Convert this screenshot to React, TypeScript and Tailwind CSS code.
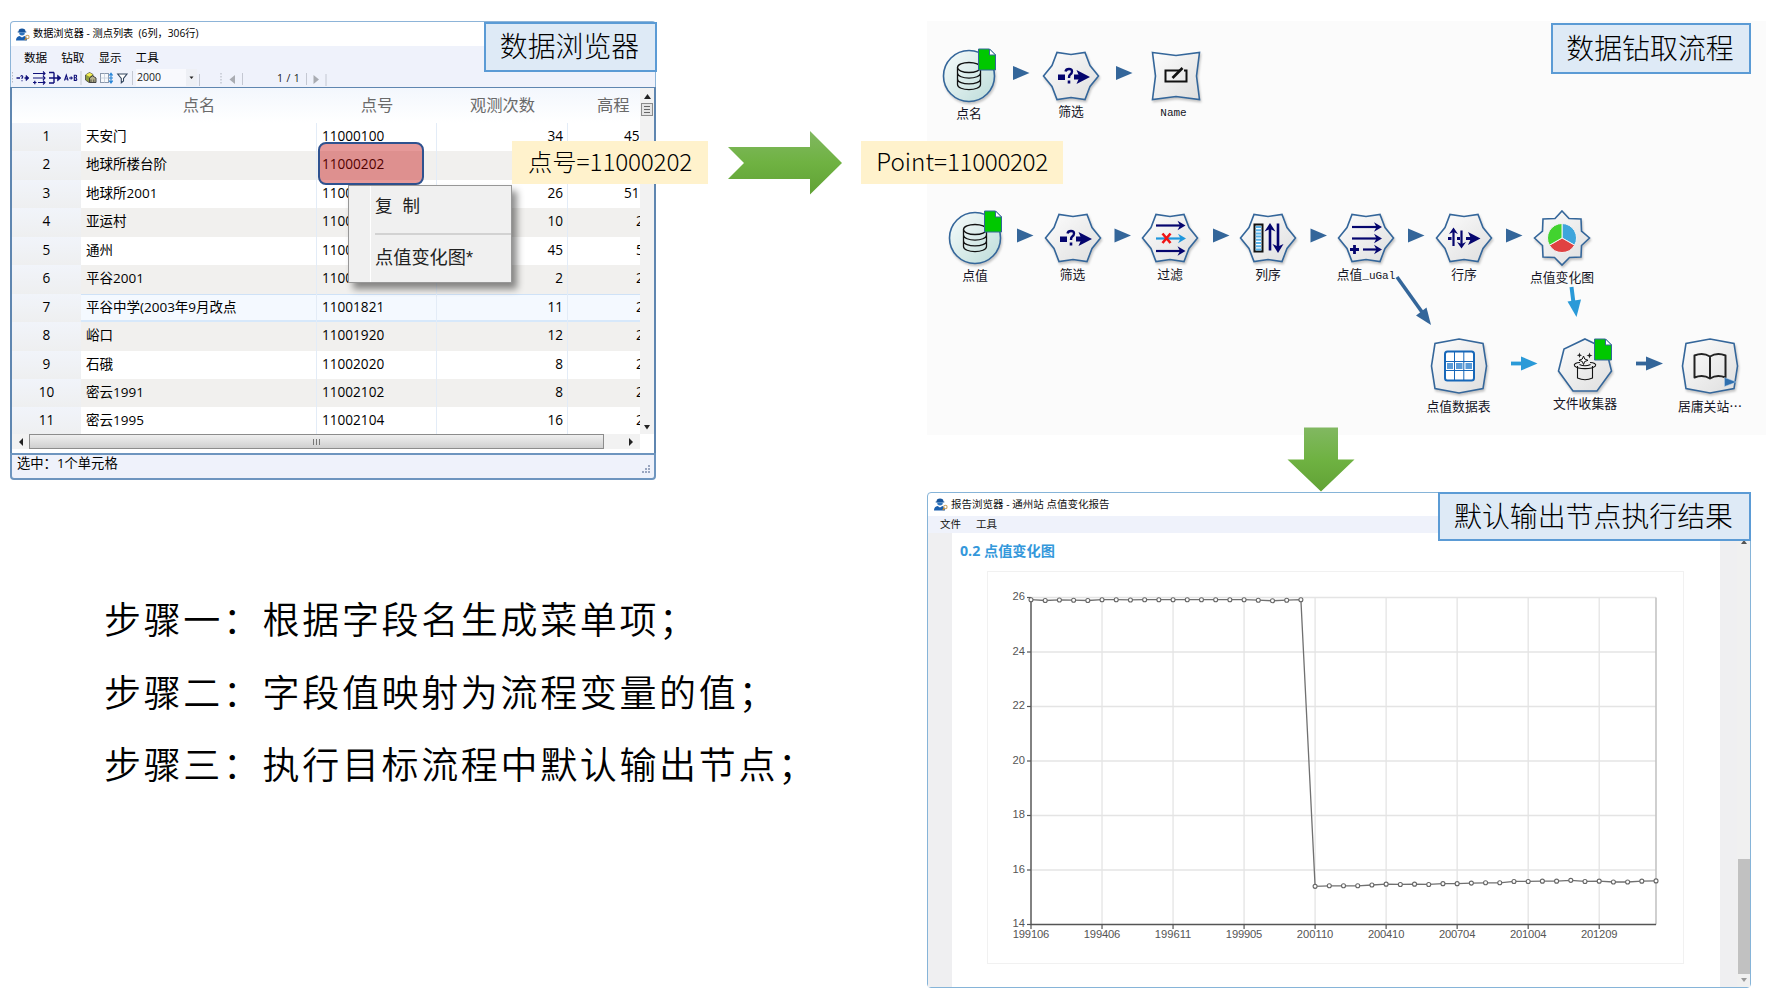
import React from "react";

const UI = "font-['Open_Sans','Noto_Sans_CJK_SC',sans-serif]";
const CJK = "font-['Noto_Sans_CJK_SC',sans-serif]";

const rows = [
  ["天安门", "11000100", "34", "45"],
  ["地球所楼台阶", "11000202", "", ""],
  ["地球所2001", "11000303", "26", "51"],
  ["亚运村", "11000410", "10", "2"],
  ["通州", "11001120", "45", "5"],
  ["平谷2001", "11001820", "2", "2"],
  ["平谷中学(2003年9月改点", "11001821", "11", "2"],
  ["峪口", "11001920", "12", "2"],
  ["石硪", "11002020", "8", "2"],
  ["密云1991", "11002102", "8", "2"],
  ["密云1995", "11002104", "16", "2"],
];

function AppIcon() {
  return (
    <svg width="14" height="13" viewBox="0 0 14 13" className="shrink-0">
      <path d="M3 1.5Q6 -.5 9 1.5L9.5 3.5H10.3V4.4H1.7V3.5H2.5Z" fill="#17549b" />
      <path d="M3.3 4.4H8.7V6.2Q6 9 3.3 6.2Z" fill="#2f75bd" />
      <path d="M0 12.5Q0 8.5 3.6 7.9L6 9.6L8.4 7.9Q10.8 8.6 11 12.5Z" fill="#1a5fae" />
      <circle cx="11.4" cy="9" r="1.7" fill="none" stroke="#c9a468" strokeWidth="1.1" />
      <path d="M10.3 10.2L8.8 12.2" stroke="#c98a2b" strokeWidth="1.3" />
    </svg>
  );
}

function ToolbarIcons() {
  return (
    <svg width="124" height="20" viewBox="12 67 124 20" className="shrink-0">
      <path d="M12.5 71V83" stroke="#b8bcc6" strokeWidth="1" strokeDasharray="1.5 1.5" />
      <g stroke="#10107a" fill="none" strokeWidth="1.4">
        <path d="M16.5 77H20M24.5 77H28" />
        <path d="M26 74.3L29 77L26 79.7Z" fill="#10107a" strokeWidth=".6" />
        <path d="M20.6 75.6Q21.2 74.2 22.4 74.9Q23.4 75.8 22 77V78M22 79.2V80.2" strokeWidth="1.1" />
        <path d="M33 72.5H45M33 77H45M38 81.5H45M33 81.5H36.5M34.8 79.8V83.2" strokeWidth="1.2" />
        <path d="M43 70.5L45 72.5L43 74.5M43 75L45 77L43 79M43 79.5L45 81.5L43 83.5" strokeWidth="1.1" />
        <path d="M49 71.5H54M49 82H54M54 71.5V82M49 77H60" />
        <path d="M57.5 74L61 77L57.5 80Z" fill="#10107a" strokeWidth=".6" />
        <path d="M64.5 79.5L66.3 74L68.1 79.5M65.1 78H67.5" strokeWidth="1.1" />
        <path d="M69 77H73M71.2 75.5V78.5" strokeWidth="1.2" />
        <path d="M74.3 74.2V79.4H76Q77.6 79 76 76.8Q77.3 74.2 75.8 74.2ZM74.3 76.8H76" strokeWidth="1.1" />
      </g>
      <path d="M81 70V84" stroke="#c4c8d2" />
      <path d="M85.5 74L89.5 71.5L93 73.5V79L89 81.5L85.5 79Z" fill="#8f9c3c" stroke="#444" strokeWidth=".8" />
      <path d="M86 73.8L89.5 75.8L92.8 73.6L89.6 71.8Z" fill="#f3ec55" />
      <path d="M89.5 77L92.5 74.8L96 77V81.5H89.5Z" fill="#b5b08d" stroke="#333" strokeWidth=".9" />
      <path d="M91 78.5V81M93.8 78.5V81" stroke="#333" strokeWidth=".8" />
      <rect x="100.5" y="72.5" width="8" height="9" fill="#f7f9fc" stroke="#8b98ac" />
      <path d="M104.5 72.5V81.5M100.5 77H108.5" stroke="#c3cbd8" strokeWidth=".8" />
      <path d="M111 73V81M109.3 74.5L111 72.3L112.7 74.5M109.3 79.7L111 82L112.7 79.7M109 77H113" stroke="#2a86d8" strokeWidth="1.2" fill="none" />
      <path d="M117.7 73H127L123.5 77.5V80L121.3 81.8V77.5Z" fill="#fff" stroke="#34465f" strokeWidth="1.1" />
      <path d="M132.5 70V84" stroke="#c4c8d2" />
    </svg>
  );
}

function DataBrowser() {
  return (
    <div className={`${UI} relative flex h-[459px] w-[646px] flex-col text-black`}>
      <div className="flex h-[25px] items-center gap-[3px] rounded-t border-x border-t border-[#8db4d8] pl-[5px] pr-[2px] text-[10.2px]">
        <AppIcon />
        <span className="whitespace-pre">数据浏览器 - 测点列表  (6列，306行)</span>
      </div>
      <div className="flex h-[22px] items-center gap-[14px] border-x border-[#8db4d8] bg-[#eff2fb] pl-[13px] pt-px text-[11.6px]">
        <span>数据</span>
        <span>钻取</span>
        <span>显示</span>
        <span>工具</span>
      </div>
      <div className="flex h-[19px] items-center border-x border-[#8db4d8] bg-[#eff2fb] pl-px text-[10.5px] text-[#222]">
        <ToolbarIcons />
        <div className="flex h-[17px] w-[61px] items-center justify-between bg-[#f8f9fd] pl-px">
          <span>2000</span>
          <span className="flex h-full w-[11px] items-center justify-center bg-[#eef0f5]">
            <svg width="5" height="4" viewBox="0 0 5 4"><path d="M.5 .5H4.5L2.5 3Z" fill="#222" /></svg>
          </span>
        </div>
        <svg width="60" height="20" viewBox="197 67 60 20">
          <path d="M199.5 73V85M242.5 72V84" stroke="#c4c8d2" />
          <path d="M221 72V84" stroke="#aeb3bd" strokeDasharray="1.5 1.5" />
          <path d="M235 74V83L229.5 78.5Z" fill="#a9acb2" />
        </svg>
        <span className="ml-[20px] w-[27px] whitespace-pre pt-[2px] text-[10.6px] tracking-[0.3px]">1 / 1</span>
        <svg width="24" height="20" viewBox="304 67 24 20">
          <path d="M306.5 72V84M326 73V85" stroke="#c4c8d2" />
          <path d="M313.5 74V83L319 78.5Z" fill="#a9acb2" />
        </svg>
      </div>
      <div className="flex h-[366px] flex-col border-x-2 border-t border-[#5f86b0] bg-white">
        <div className="flex h-[346px]">
          <div className="flex w-[628px] flex-col overflow-hidden">
            <div className="flex h-[35px] shrink-0 items-center bg-linear-to-b from-[#f3f7fd] to-white text-[16.3px] text-[#6a6a6a]">
              <div className="w-[69px]" />
              <div className="w-[236px] text-center">点名</div>
              <div className="w-[120px] text-center">点号</div>
              <div className="w-[131px] text-center">观测次数</div>
              <div className="w-[72px] pl-[29px]">高程</div>
            </div>
            {rows.map((r, i) => (
              <div
                key={i}
                className={`flex h-[28.45px] shrink-0 items-stretch text-[13.6px] leading-[26.5px] ${
                  i === 6 ? "bg-[#f4f9ff] shadow-[inset_0_1px_0_#cfe2f7,inset_0_-2px_0_#d7e8fa]" : i % 2 ? "bg-[#f1f0ee]" : "bg-white"
                }`}
              >
                <div className="w-[69px] bg-linear-to-b from-[#f1f4fa] to-[#eeeff0] text-center">{i + 1}</div>
                <div className="w-[236px] whitespace-nowrap border-r border-[#e3ecf7] pl-[5px] text-[13.5px]">{r[0]}</div>
                <div className="w-[120px] border-r border-[#e3ecf7] pl-[5px]">{r[1]}</div>
                <div className="w-[131px] border-r border-[#e3ecf7] pr-[4px] text-right">{r[2]}</div>
                <div className="flex w-[72px] overflow-hidden">
                  <span className={r[3].length > 1 ? "pl-[56px]" : "pl-[68px]"}>{r[3]}</span>
                </div>
              </div>
            ))}
          </div>
          <div className="flex w-[14px] flex-col items-center justify-between bg-[#f2f2f2] pb-[4px] pt-[6px]">
            <div className="flex flex-col items-center gap-[4px]">
              <svg width="7" height="5" viewBox="0 0 7 5"><path d="M0 5H7L3.5 0Z" fill="#222" /></svg>
              <div className="flex h-[13px] w-[12px] flex-col items-center justify-center gap-[2px] border border-[#8b8b8b] bg-[#e4e4e4]">
                <i className="h-px w-[6px] bg-[#666]" />
                <i className="h-px w-[6px] bg-[#666]" />
                <i className="h-px w-[6px] bg-[#666]" />
              </div>
            </div>
            <svg width="6" height="5" viewBox="0 0 6 5"><path d="M0 0H6L3 4.5Z" fill="#222" /></svg>
          </div>
        </div>
        <div className="flex h-[15px] w-[628px] items-center bg-[#f2f2f2]">
          <div className="flex w-[17px] shrink-0 justify-center">
            <svg width="4" height="8" viewBox="0 0 4 8"><path d="M4 0V8L0 4Z" fill="#222" /></svg>
          </div>
          <div className="flex h-[15px] w-[575px] shrink-0 items-center justify-center gap-[2px] border border-[#8c8c8c] bg-linear-to-b from-[#efefef] to-[#cfcfcf]">
            <i className="h-[6px] w-px bg-[#777]" />
            <i className="h-[6px] w-px bg-[#777]" />
            <i className="h-[6px] w-px bg-[#777]" />
          </div>
          <div className="flex grow justify-end pr-[7px]">
            <svg width="4" height="8" viewBox="0 0 4 8"><path d="M0 0V8L4 4Z" fill="#222" /></svg>
          </div>
        </div>
      </div>
      <div className="flex h-[27px] items-center justify-between rounded-b border-2 border-[#6e95bf] bg-[#eff2fb] pl-[5px] pr-[4px] text-[13.3px] leading-none">
        <span className="-mt-[6px]">选中：1个单元格</span>
        <svg width="8" height="8" viewBox="0 0 8 8" className="mt-[5px]" fill="#9aa6c0">
          <path d="M6 0h2v2H6zM3 3h2v2H3zM6 3h2v2H6zM0 6h2v2H0zM3 6h2v2H3zM6 6h2v2H6z" />
        </svg>
      </div>
    </div>
  );
}

type Kind = "db" | "ask" | "name" | "filter" | "colsort" | "derive" | "rowsort" | "pie" | "table" | "hat" | "book";

const HEX = "M-27.5 0L-19 -10.5L-14 -23.5L0 -21.5L14 -23.5L19 -10.5L27.5 0L19 10.5L14 23.5L0 21.5L-14 23.5L-19 10.5Z";
const OCT = "M0 -27L24 -22.5L27.5 0L24 22.5L0 27L-24 22.5L-27.5 0L-24 -22.5Z";
const HEPT = "M0 -26L21 -16L26.5 6L12 26H-12L-26.5 6L-21 -16Z";
const SQ = "M-23.5 -23.5L0 -20.5L23.5 -23.5L20.5 0L23.5 23.5L0 20.5L-23.5 23.5L-20.5 0Z";
const STAR = "M0 -27L7 -19.5L19 -19L19.5 -7L27.5 0L19.5 7.5L19 19L7.5 19.5L0 27L-7.5 19.5L-19 19L-19.5 7.5L-27.5 0L-19.5 -7L-19 -19L-7 -19.5Z";

const outline: Record<Kind, string> = {
  db: "", ask: HEX, filter: HEX, colsort: HEX, derive: HEX, rowsort: HEX, name: SQ, pie: STAR, table: OCT, book: OCT, hat: HEPT,
};

const NAVY = "#05056e";

function Arr({ x1, x2, y, c = NAVY, w = 2.2 }: { x1: number; x2: number; y: number; c?: string; w?: number }) {
  return (
    <g>
      <path d={`M${x1} ${y}H${x2 - 4}`} stroke={c} strokeWidth={w} />
      <path d={`M${x2} ${y}L${x2 - 8} ${y - 4.8}L${x2 - 5.5} ${y}L${x2 - 8} ${y + 4.8}Z`} fill={c} />
    </g>
  );
}

function Doc({ x, y }: { x: number; y: number }) {
  return (
    <g transform={`translate(${x} ${y})`}>
      <path d="M0 0H11L17 6V21H0Z" fill="#00c800" stroke="#34669a" strokeWidth="1" />
      <path d="M11 0V6H17Z" fill="#fff" stroke="#34669a" strokeWidth="1" />
    </g>
  );
}

function Glyph({ kind }: { kind: Kind }) {
  switch (kind) {
    case "db":
      return (
        <g>
          <g fill="none" stroke="#111" strokeWidth="1.3">
            <ellipse cx="0" cy="-8.5" rx="11.5" ry="5" />
            <path d="M-11.5 -8.5V8.5C-11.5 15.2 11.5 15.2 11.5 8.5V-8.5M-11.5 -3C-11.5 3.7 11.5 3.7 11.5 -3M-11.5 3C-11.5 9.5 11.5 9.5 11.5 3" />
          </g>
          <Doc x={9.5} y={-27} />
        </g>
      );
    case "ask":
      return (
        <g>
          <path d="M-13 -1.5H-6V4H-13Z" fill={NAVY} />
          <path d="M-5.5 -4.5Q-5 -7 -2 -7Q1 -7 1 -4.5Q1 -2.5 -1 -1.2Q-2 -.4 -2 2" fill="none" stroke={NAVY} strokeWidth="2.4" />
          <path d="M-3.3 4.5H-.7V7.5H-3.3Z" fill={NAVY} />
          <path d="M3 -1.5H10V3.5H3Z" fill={NAVY} />
          <path d="M5.5 -6L19 1L5.5 8L8.5 1Z" fill={NAVY} />
        </g>
      );
    case "name":
      return (
        <g fill="none" stroke="#111" strokeWidth="2">
          <path d="M4 -5.5H-10.5V5.5H10.5V-5.5H8" />
          <path d="M-3.5 2L6.5 -8" strokeWidth="2.6" />
        </g>
      );
    case "filter":
      return (
        <g>
          <Arr x1={-14} x2={15.5} y={-12.5} />
          <Arr x1={-14} x2={16} y={0.5} c="#1f97dc" />
          <Arr x1={-14} x2={15.5} y={13} />
          <path d="M-7.5 -4.5L.5 5M.5 -4.5L-7.5 5" stroke="#f01414" strokeWidth="2.6" />
        </g>
      );
    case "colsort":
      return (
        <g>
          <rect x="-13.5" y="-13.5" width="8" height="27" fill="#fff" stroke="#111" strokeWidth="2" />
          <path d="M-9.5 -12V13" stroke="#5bb4ea" strokeWidth="5.6" strokeDasharray="2 1.2" />
          <path d="M2 12.5V-12M10 -14.5V11" stroke={NAVY} strokeWidth="2.6" />
          <path d="M2 -15L7.5 -6.5L2 -9L-3.5 -6.5ZM10 15L15.5 6L10 8.5L4.5 6Z" fill={NAVY} />
        </g>
      );
    case "derive":
      return (
        <g>
          <Arr x1={-14} x2={16} y={-11} />
          <Arr x1={-14} x2={16} y={0.5} />
          <Arr x1={-3} x2={16} y={11.5} />
          <path d="M-16 11.5H-7M-11.5 7V16" stroke={NAVY} strokeWidth="2.8" />
        </g>
      );
    case "rowsort":
      return (
        <g>
          <path d="M-16 .5H-12.5M-7 .5H-4M2 .5H9" stroke={NAVY} strokeWidth="3.2" />
          <path d="M-10.5 8V-8M-2.5 -7.5V8" stroke={NAVY} strokeWidth="2.2" />
          <path d="M-10.5 -10.5L-6 -4L-10.5 -6L-15 -4ZM-2.5 10.5L2 4L-2.5 6L-7 4ZM16.5 .5L4 -6L7 .5L4 7Z" fill={NAVY} />
        </g>
      );
    case "pie":
      return (
        <g stroke="#f3f3f3" strokeWidth="1">
          <path d="M0 0V-14.5A14.5 14.5 0 0 1 12.6 7.2Z" fill="#3da5dc" />
          <path d="M0 0L12.6 7.2A14.5 14.5 0 0 1 -12.6 7.2Z" fill="#e04242" />
          <path d="M0 0L-12.6 7.2A14.5 14.5 0 0 1 0 -14.5Z" fill="#42d32f" />
        </g>
      );
    case "table":
      return (
        <g>
          <rect x="-14" y="-14.5" width="29" height="29" rx="2.5" fill="#fff" stroke="#1767b8" strokeWidth="2" />
          <path d="M-4.5 -14V14M4.8 -14V14M-14 -4.5H15M-14 4.5H15" stroke="#1767b8" strokeWidth="1" />
          <path d="M-12 -3H-6V3H-12ZM-3 -3H3.5V3H-3ZM6.5 -3H13V3H6.5Z" fill="#5a9bd8" />
        </g>
      );
    case "hat":
      return (
        <g>
          <g fill="none" stroke="#111" strokeWidth="1.1">
            <path d="M-7.5 1V13Q0 16.5 7.5 13V1" />
            <path d="M-5 -2.5C-9 -2.5 -11.5 -1 -10.5 .8C-7 4.5 7 4.5 10.5 .8C11.5 -1 9 -2.5 5 -2.5" />
            <path d="M-5.5 -.5Q0 2 5.5 -.5" />
          </g>
          <path d="M-1.5 -9L-.3 -6L3 -4.7L-.3 -3.5L-1.5 -.5L-2.7 -3.5L-6 -4.7L-2.7 -6Z" fill="#fff" stroke="#111" strokeWidth="1" />
          <path d="M-5.5 -12.5L-4.8 -10.4L-2.9 -9.7L-4.8 -9L-5.5 -7L-6.2 -9L-8.2 -9.7L-6.2 -10.4ZM4.5 -12.5L5.3 -10.3L7.5 -9.5L5.3 -8.7L4.5 -6.5L3.7 -8.7L1.5 -9.5L3.7 -10.3Z" fill="#222" />
          <Doc x={9.5} y={-26} />
        </g>
      );
    case "book":
      return (
        <g>
          <path d="M0 -9.5Q-7 -14 -15.5 -10.5V11.5Q-7 8 0 12.5Q7 8 15.5 11.5V-10.5Q7 -14 0 -9.5ZM0 -9.5V12" fill="none" stroke="#222" strokeWidth="2" strokeLinejoin="round" />
          <path d="M14.5 11.5L26.5 16L14.5 20.5Z" fill="#2f6fae" stroke="#b9d3ea" strokeWidth=".5" />
        </g>
      );
  }
}

interface NodeSpec {
  kind: Kind;
  x: number;
  y: number;
  label: string;
  dy?: number;
}

const nodes: NodeSpec[] = [
  { kind: "db", x: 42, y: 54.5, label: "点名", dy: 0.5 },
  { kind: "ask", x: 144, y: 54.5, label: "筛选", dy: -1.5 },
  { kind: "name", x: 248.5, y: 54.5, label: "Name", dy: 0.5 },
  { kind: "db", x: 48, y: 217, label: "点值", dy: 0 },
  { kind: "ask", x: 145.5, y: 217, label: "筛选", dy: -1 },
  { kind: "filter", x: 243, y: 217, label: "过滤", dy: -1 },
  { kind: "colsort", x: 341, y: 217, label: "列序", dy: -1 },
  { kind: "derive", x: 439, y: 217, label: "点值_uGal", dy: -1 },
  { kind: "rowsort", x: 537, y: 217, label: "行序", dy: -1 },
  { kind: "pie", x: 635, y: 217, label: "点值变化图", dy: 2 },
  { kind: "table", x: 531.5, y: 345, label: "点值数据表", dy: 3 },
  { kind: "hat", x: 658, y: 344, label: "文件收集器", dy: 1 },
  { kind: "book", x: 783, y: 345, label: "居庸关站⋯", dy: 3 },
];

function FlowNode({ kind, x, y, label, dy = 0 }: NodeSpec) {
  return (
    <div className="absolute flex w-[100px] flex-col items-center" style={{ left: x - 50, top: y - 30 }}>
      <svg width="60" height="60" viewBox="-30 -30 60 60" className="overflow-visible">
        <g className="drop-shadow-[1px_2px_1px_rgba(0,0,0,0.22)]">
          {kind === "db" ? (
            <circle r="25.5" fill="url(#teal)" stroke="#34669a" strokeWidth="1.6" />
          ) : (
            <path d={outline[kind]} fill="url(#grey)" stroke="#34669a" strokeWidth="1.6" />
          )}
        </g>
        <Glyph kind={kind} />
      </svg>
      <span
        className={`whitespace-nowrap leading-[14px] text-[#151525] ${
          label === "Name"
            ? "-ml-[4px] font-['Liberation_Mono',monospace] text-[11px]"
            : "font-['Noto_Sans_CJK_SC',sans-serif] text-[12.8px]"
        }`}
        style={{ marginTop: dy }}
      >
        {label === "点值_uGal" ? (
          <>
            点值<span className="font-['Liberation_Mono',monospace] text-[11px]">_uGal</span>
          </>
        ) : (
          label
        )}
      </span>
    </div>
  );
}

const heads: [number, number][] = [
  [1013, 73], [1116, 73],
  [1017, 235.5], [1114.5, 235.5], [1213, 235.5], [1310.5, 235.5], [1408, 235.5], [1506, 235.5],
];

function FlowCanvas() {
  return (
    <div className="relative h-[414px] w-[839px] bg-[#fbfbfb]">
      <svg width="839" height="414" viewBox="927 21 839 414" className="absolute left-0 top-0">
        <defs>
          <linearGradient id="grey" x1="0" y1="0" x2="1" y2="1">
            <stop offset="0" stopColor="#fdfdfd" />
            <stop offset="1" stopColor="#dedede" />
          </linearGradient>
          <linearGradient id="teal" x1="0" y1="0" x2="1" y2="1">
            <stop offset="0" stopColor="#f8fcfc" />
            <stop offset="1" stopColor="#bcdcd9" />
          </linearGradient>
        </defs>
        {heads.map(([x, y], i) => (
          <path key={i} d={`M${x} ${y - 7}L${x + 16.5} ${y}L${x} ${y + 7}Z`} fill="#34669a" />
        ))}
        <path d="M1397 277L1422 312" stroke="#34669a" strokeWidth="3.6" />
        <path d="M1431 325L1416 315.5L1426.5 307.5Z" fill="#34669a" />
        <path d="M1571.5 287L1573.5 303" stroke="#2a9ad8" strokeWidth="4" />
        <path d="M1576.5 317L1567.500 301.5L1581 299.5Z" fill="#2a9ad8" />
        <path d="M1511 363.5H1523" stroke="#2a9ad8" strokeWidth="3.8" />
        <path d="M1521 356.5L1537.5 363.5L1521 370.5Z" fill="#2a9ad8" />
        <path d="M1636 363.5H1648" stroke="#34669a" strokeWidth="3.8" />
        <path d="M1646 356.5L1663 363.5L1646 370.5Z" fill="#34669a" />
      </svg>
      {nodes.map((n, i) => (
        <FlowNode key={i} {...n} />
      ))}
    </div>
  );
}

const series = [
  25.92, 25.89, 25.91, 25.9, 25.89, 25.92, 25.92, 25.91, 25.92, 25.92, 25.92, 25.92, 25.92, 25.92, 25.92, 25.92, 25.9, 25.88, 25.9, 25.92,
  15.4, 15.42, 15.42, 15.42, 15.45, 15.48, 15.47, 15.48, 15.47, 15.5, 15.5, 15.52, 15.53, 15.53, 15.58, 15.58, 15.59, 15.59, 15.62, 15.58,
  15.59, 15.56, 15.56, 15.59, 15.6,
];
const px = (i: number) => 43 + i * 14.205;
const py = (v: number) => 25.5 + (26 - v) * 27.25;

function Chart() {
  const xs = ["199106", "199406", "199611", "199905", "200110", "200410", "200704", "201004", "201209"];
  return (
    <svg width="697" height="393" viewBox="0 0 695 391" className="border border-[#f1f1f1] font-['Liberation_Sans',sans-serif]" fontSize="11.2" fill="#555">
      {[26, 24, 22, 20, 18, 16].map((v) => (
        <path key={v} d={`M43 ${py(v)}H668`} stroke="#e4e4e4" strokeWidth="1.3" />
      ))}
      {xs.map((_, i) => (
        <path key={i} d={`M${px(i * 5)} 25.5V352.5`} stroke="#e4e4e4" strokeWidth="1.3" />
      ))}
      <path d="M668 25.5V352.5" stroke="#c4c4c4" strokeWidth="1.6" />
      <path d="M43 25.5V352.500H668" fill="none" stroke="#555" strokeWidth="1.4" />
      {[26, 24, 22, 20, 18, 16, 14].map((v) => (
        <g key={v}>
          <path d={`M39 ${py(v)}H43`} stroke="#555" strokeWidth="1.2" />
          <text x="37" y={py(v) + 2.5} textAnchor="end">{v}</text>
        </g>
      ))}
      {xs.map((t, i) => (
        <g key={t}>
          <path d={`M${px(i * 5)} 352.5V357`} stroke="#555" strokeWidth="1.2" />
          <text x={px(i * 5)} y="365.500" textAnchor="middle" textLength="36.5">{t}</text>
        </g>
      ))}
      <polyline points={series.map((v, i) => `${px(i)},${py(v)}`).join(" ")} fill="none" stroke="#707070" strokeWidth="1.3" />
      {series.map((v, i) => (
        <circle key={i} cx={px(i)} cy={py(v)} r="2" fill="#fff" stroke="#666" strokeWidth="1.1" />
      ))}
    </svg>
  );
}

function ReportBrowser() {
  return (
    <div className={`${UI} flex h-[496px] w-[824px] flex-col rounded border border-[#86b4d8] bg-white text-[#111]`}>
      <div className="flex h-[23px] shrink-0 items-center gap-[3px] pl-[6px] text-[10.5px]">
        <AppIcon />
        <span className="whitespace-pre">报告浏览器 - 通州站 点值变化报告</span>
      </div>
      <div className="flex h-[17px] shrink-0 items-center gap-[15px] bg-[#eff2fb] pl-[12px] pt-px text-[10.5px]">
        <span>文件</span>
        <span>工具</span>
      </div>
      <div className="flex grow">
        <div className="w-[24px] bg-[#efeff1]" />
        <div className="flex grow flex-col pl-[8px] pt-[9px]">
          <h2 className="h-[29px] text-[14.2px] font-bold leading-[18px] text-[#3498db]">0.2 点值变化图</h2>
          <div className="pl-[27px]">
            <Chart />
          </div>
        </div>
        <div className="flex w-[30px] justify-end bg-[#efeff1]">
          <div className="flex w-[13px] flex-col items-center justify-between bg-[#f0f0f0] pb-[5px] pt-[7px]">
            <svg width="6" height="4" viewBox="0 0 6 4"><path d="M0 4H6L3 0Z" fill="#555" /></svg>
            <div className="flex flex-col items-center gap-[4px]">
              <div className="h-[115px] w-[12px] bg-[#c1c1c1]" />
              <svg width="6" height="4" viewBox="0 0 6 4"><path d="M0 0H6L3 4Z" fill="#999" /></svg>
            </div>
          </div>
        </div>
      </div>
    </div>
  );
}

function Caption({ className, children }: { className: string; children: React.ReactNode }) {
  return (
    <div className={`${CJK} absolute flex items-center justify-center whitespace-nowrap border-2 border-[#5b9bd5] bg-[#deeaf6] pb-[2px] pr-[2px] text-[27.9px] font-light leading-none text-black ${className}`}>
      {children}
    </div>
  );
}

function Tag({ className, children }: { className: string; children: React.ReactNode }) {
  return (
    <div className={`${CJK} absolute flex h-[43px] items-center justify-center whitespace-nowrap bg-[#fff2cc] pb-[2px] text-[24.3px] font-light leading-none text-black ${className}`}>
      {children}
    </div>
  );
}

export default function App() {
  return (
    <main className="relative flex h-[993px] w-[1766px] overflow-hidden bg-white">
      <section className="flex w-[927px] flex-col pl-[10px] pt-[21px]">
        <DataBrowser />
        <div className={`${CJK} mt-[102px] flex flex-col pl-[94px] text-[37px] font-[350] leading-[72.5px] tracking-[2.65px] text-black`}>
          <p>步骤一：根据字段名生成菜单项；</p>
          <p>步骤二：字段值映射为流程变量的值；</p>
          <p>步骤三：执行目标流程中默认输出节点；</p>
        </div>
      </section>
      <section className="flex w-[839px] flex-col gap-[57px] pt-[21px]">
        <FlowCanvas />
        <ReportBrowser />
      </section>

      <div className="absolute left-[318px] top-[142px] h-[43px] w-[106px] rounded-[8px] border-2 border-[#2f528f] bg-[#c00000]/40" />
      <div className="absolute left-[348px] top-[185px] flex h-[98px] w-[164px] border border-[#979797] bg-[#f0f0f0] font-['Liberation_Sans','Noto_Sans_CJK_SC',sans-serif] text-[18.2px] leading-none text-[#222] shadow-[5px_6px_7px_rgba(0,0,0,0.45)]">
        <div className="w-[22px] border-r border-white" />
        <div className="flex grow flex-col pl-[4px]">
          <div className="flex h-[47px] items-center gap-[10px] pb-[6px] text-[17.5px]">
            <span>复</span>
            <span>制</span>
          </div>
          <div className="h-[2px] shrink-0 bg-[#d2d2d2]" />
          <div className="flex h-[46px] items-center whitespace-nowrap">点值变化图*</div>
        </div>
      </div>

      <Caption className="left-[484px] top-[22px] h-[50px] w-[173px]">数据浏览器</Caption>
      <Caption className="left-[1551px] top-[23px] h-[51px] w-[200px]">数据钻取流程</Caption>
      <Caption className="left-[1438px] top-[492px] h-[49px] w-[313px]">默认输出节点执行结果</Caption>

      <Tag className="left-[512px] top-[141px] w-[196px]">
        点号=<span className="tracking-[-0.2px]">11000202</span>
      </Tag>
      <Tag className="left-[861px] top-[141px] w-[202px]">
        Point=<span className="tracking-[-0.4px]">11000202</span>
      </Tag>

      <svg width="116" height="66" viewBox="727 130 116 66" className="absolute left-[727px] top-[130px]">
        <defs>
          <linearGradient id="green" x1="0" y1="0" x2="0" y2="1">
            <stop offset="0" stopColor="#81b861" />
            <stop offset=".5" stopColor="#6fb242" />
            <stop offset="1" stopColor="#61a235" />
          </linearGradient>
        </defs>
        <path d="M728 147H810V131L842 163L810 194.5V179H728L744 163Z" fill="url(#green)" />
      </svg>
      <svg width="68" height="66" viewBox="1287 428 68 66" className="absolute left-[1287px] top-[427px]">
        <path d="M1304 428.5H1338V460.5H1354.5L1321 492.5L1287.5 460.5H1304Z" fill="url(#green)" />
      </svg>
    </main>
  );
}
